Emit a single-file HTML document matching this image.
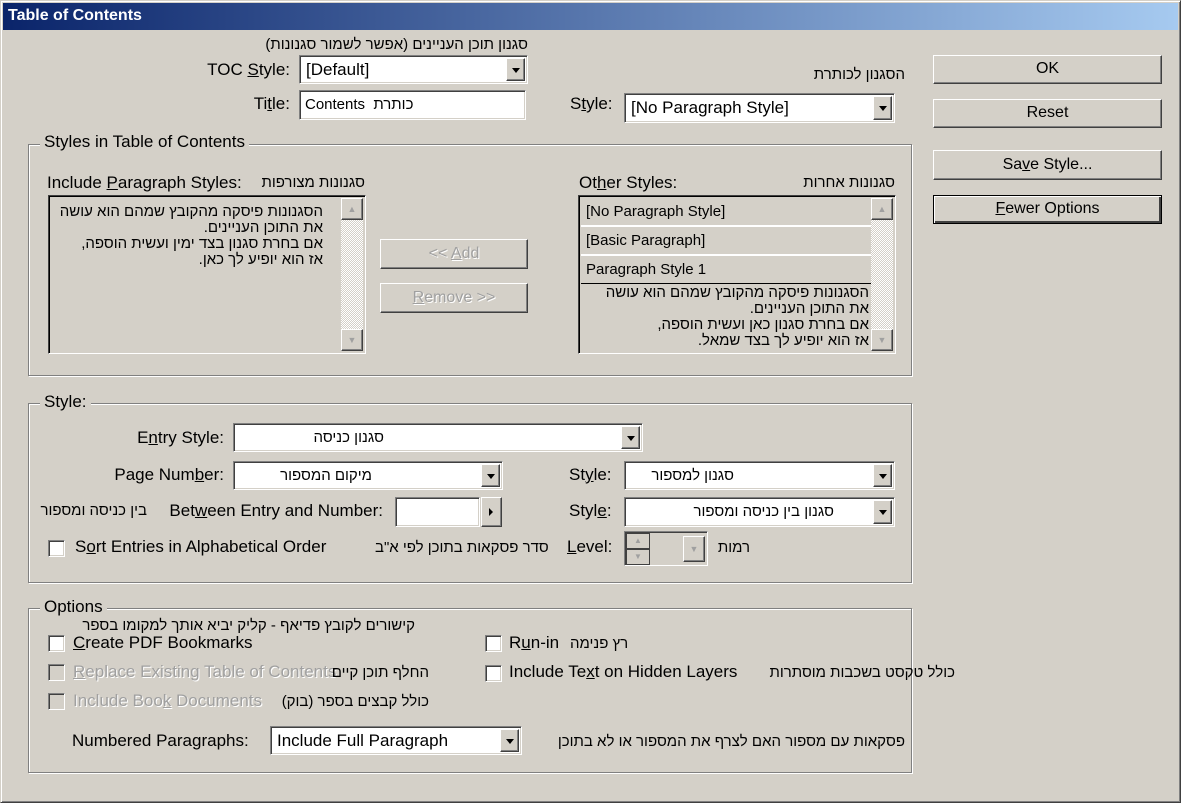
<!DOCTYPE html>
<html><head><meta charset="utf-8"><style>
*{box-sizing:border-box}
body{margin:0;width:1181px;height:803px;background:#d4d0c8;position:relative;overflow:hidden;font-family:"Liberation Sans","Noto Sans CJK JP",sans-serif;font-size:16px;color:#000}
.a{position:absolute;white-space:nowrap}
.he{position:absolute;white-space:nowrap;direction:rtl;font-family:"Liberation Sans","Noto Sans CJK JP",sans-serif;font-size:15px}
.sunk{position:absolute;background:#fff;border:1px solid;border-color:#808080 #fff #fff #808080;box-shadow:inset 1px 1px #404040,inset -1px -1px #d4d0c8}
.btn{position:absolute;background:#d4d0c8;border:1px solid;border-color:#fff #404040 #404040 #fff;box-shadow:inset -1px -1px #808080;text-align:center}
.dd{position:absolute;right:2px;top:2px;bottom:2px;width:19px;background:#d4d0c8;border:1px solid;border-color:#fff #404040 #404040 #fff;box-shadow:inset -1px -1px #808080}
.dd:after{content:"";position:absolute;left:5px;top:50%;margin-top:-2px;border-left:4px solid transparent;border-right:4px solid transparent;border-top:5px solid #000}
.grp{position:absolute;border:1px solid #808080;box-shadow:inset 1px 1px #fff,1px 1px #fff}
.gl{position:absolute;background:#d4d0c8;padding:0 4px;color:#000}
.cb{position:absolute;width:17px;height:17px;background:#fff;border:1px solid;border-color:#808080 #fff #fff #808080;box-shadow:inset 1px 1px #404040,inset -1px -1px #d4d0c8}
.cb.dis{background:#d4d0c8}
.dis{color:#a0a0a0}
u{text-decoration:underline}
</style></head><body>
<div class="a" style="left:0;top:0;width:1181px;height:803px;border:1px solid;border-color:#d4d0c8 #404040 #404040 #d4d0c8;box-shadow:inset 1px 1px #fff,inset -1px -1px #808080"></div>
<div class="a" style="left:3px;top:3px;width:1175px;height:27px;background:linear-gradient(90deg,#0a246a,#a6caf0);color:#fff;font-weight:bold;font-size:16px;line-height:26px;padding-left:5px">Table of Contents</div>

<div class="he" style="right:653px;top:36px">סגנון תוכן העניינים (אפשר לשמור סגנונות)</div>
<div class="a" style="right:891px;top:60px;font-size:17px">TOC <u>S</u>tyle:</div>
<div class="sunk" style="left:299px;top:55px;width:229px;height:29px"><span class="a" style="left:6px;top:4px;font-size:17px">[Default]</span><div class="dd"></div></div>
<div class="a" style="right:891px;top:94px;font-size:17px">Ti<u>t</u>le:</div>
<div class="sunk" style="left:299px;top:90px;width:227px;height:30px"><span class="a" style="left:5px;top:5px;font-size:15px">Contents&nbsp; <span style="direction:rtl">כותרת</span></span></div>
<div class="he" style="right:276px;top:66px">הסגנון לכותרת</div>
<div class="a" style="left:570px;top:94px;font-size:17px">S<u>t</u>yle:</div>
<div class="sunk" style="left:624px;top:93px;width:271px;height:30px"><span class="a" style="left:6px;top:4px;font-size:17px">[No Paragraph Style]</span><div class="dd"></div></div>

<div class="btn" style="left:933px;top:55px;width:229px;height:29px;line-height:26px">OK</div>
<div class="btn" style="left:933px;top:99px;width:229px;height:29px;line-height:26px">Reset</div>
<div class="btn" style="left:933px;top:150px;width:229px;height:30px;line-height:27px">Sa<u>v</u>e Style...</div>
<div class="btn" style="left:933px;top:195px;width:229px;height:29px;line-height:25px;border-color:#000;box-shadow:inset 1px 1px #fff,inset -2px -2px #404040,inset -1px -1px #808080"><u>F</u>ewer Options</div>

<div class="grp" style="left:28px;top:144px;width:884px;height:232px"></div>
<div class="gl" style="left:40px;top:132px;font-size:17px">Styles in Table of Contents</div>
<div class="a" style="left:47px;top:173px;font-size:17px">Include <u>P</u>aragraph Styles:</div>
<div class="he" style="right:816px;top:174px">סגנונות מצורפות</div>
<div class="a" style="left:48px;top:195px;width:318px;height:159px;border:1px solid;border-color:#404040 #fff #fff #404040;box-shadow:inset 1px 1px #000,inset -1px -1px #d4d0c8">
 <div class="he" style="right:42px;top:8px;line-height:16px;text-align:right">הסגנונות פיסקה מהקובץ שמהם הוא עושה<br>את התוכן העניינים.<br>אם בחרת סגנון בצד ימין ועשית הוספה,<br>אז הוא יופיע לך כאן.</div>
 <div class="a" style="right:2px;top:2px;bottom:2px;width:22px;background:repeating-conic-gradient(#fff 0 25%,#d4d0c8 0 50%) 0 0/2px 2px"></div>
 <div class="btn" style="right:2px;top:2px;width:22px;height:22px;color:#a0a0a0;font-size:9px;line-height:20px">▲</div>
 <div class="btn" style="right:2px;bottom:2px;width:22px;height:22px;color:#a0a0a0;font-size:9px;line-height:20px">▼</div>
</div>
<div class="btn dis" style="left:380px;top:239px;width:148px;height:30px;line-height:27px;text-shadow:1px 1px #fff">&lt;&lt; <u>A</u>dd</div>
<div class="btn dis" style="left:380px;top:283px;width:148px;height:30px;line-height:27px;text-shadow:1px 1px #fff"><u>R</u>emove &gt;&gt;</div>
<div class="a" style="left:579px;top:173px;font-size:17px">Ot<u>h</u>er Styles:</div>
<div class="he" style="right:286px;top:174px">סגנונות אחרות</div>
<div class="a" style="left:578px;top:195px;width:318px;height:159px;border:1px solid;border-color:#404040 #fff #fff #404040;box-shadow:inset 1px 1px #000,inset -1px -1px #d4d0c8">
 <div class="a" style="left:2px;top:2px;width:290px;height:29px;border-bottom:2px solid #fff;line-height:27px;padding-left:5px;font-size:15px">[No Paragraph Style]</div>
 <div class="a" style="left:2px;top:31px;width:290px;height:29px;border-bottom:2px solid #fff;line-height:27px;padding-left:5px;font-size:15px">[Basic Paragraph]</div>
 <div class="a" style="left:2px;top:60px;width:290px;height:28px;border-bottom:1px solid #000;line-height:27px;padding-left:5px;font-size:15px">Paragraph Style 1</div>
 <div class="he" style="right:26px;top:89px;line-height:16px;text-align:right">הסגנונות פיסקה מהקובץ שמהם הוא עושה<br>את התוכן העניינים.<br>אם בחרת סגנון כאן ועשית הוספה,<br>אז הוא יופיע לך בצד שמאל.</div>
 <div class="a" style="right:2px;top:2px;bottom:2px;width:22px;background:repeating-conic-gradient(#fff 0 25%,#d4d0c8 0 50%) 0 0/2px 2px"></div>
 <div class="btn" style="right:2px;top:2px;width:22px;height:22px;color:#a0a0a0;font-size:9px;line-height:20px">▲</div>
 <div class="btn" style="right:2px;bottom:2px;width:22px;height:22px;color:#a0a0a0;font-size:9px;line-height:20px">▼</div>
</div>

<div class="grp" style="left:28px;top:403px;width:884px;height:180px"></div>
<div class="gl" style="left:40px;top:392px;font-size:17px">Style:</div>
<div class="a" style="right:957px;top:428px;font-size:17px">E<u>n</u>try Style:</div>
<div class="sunk" style="left:233px;top:423px;width:410px;height:29px"><span class="he" style="right:258px;top:5px">סגנון כניסה</span><div class="dd"></div></div>
<div class="a" style="right:957px;top:465px;font-size:17px">Page Num<u>b</u>er:</div>
<div class="sunk" style="left:233px;top:461px;width:270px;height:29px"><span class="he" style="right:130px;top:5px">מיקום המספור</span><div class="dd"></div></div>
<div class="a" style="left:569px;top:465px;font-size:17px">St<u>y</u>le:</div>
<div class="sunk" style="left:624px;top:461px;width:271px;height:29px"><span class="he" style="right:160px;top:5px">סגנון למספור</span><div class="dd"></div></div>
<div class="he" style="right:1034px;top:502px">בין כניסה ומספור</div>
<div class="a" style="right:798px;top:501px;font-size:17px">Bet<u>w</u>een Entry and Number:</div>
<div class="sunk" style="left:395px;top:497px;width:85px;height:30px"></div>
<div class="btn" style="left:481px;top:497px;width:21px;height:30px"><span class="a" style="left:7px;top:10px;border-top:4px solid transparent;border-bottom:4px solid transparent;border-left:4px solid #000"></span></div>
<div class="a" style="left:569px;top:501px;font-size:17px">Styl<u>e</u>:</div>
<div class="sunk" style="left:624px;top:497px;width:271px;height:30px"><span class="he" style="right:60px;top:5px">סגנון בין כניסה ומספור</span><div class="dd"></div></div>
<div class="cb" style="left:48px;top:540px"></div>
<div class="a" style="left:75px;top:537px;font-size:17px">S<u>o</u>rt Entries in Alphabetical Order</div>
<div class="he" style="left:375px;top:539px">סדר פסקאות בתוכן לפי א"ב</div>
<div class="a" style="left:567px;top:537px;font-size:17px"><u>L</u>evel:</div>
<div class="a" style="left:624px;top:531px;width:84px;height:35px;border:1px solid;border-color:#808080 #fff #fff #808080;box-shadow:inset 1px 1px #404040">
 <div class="a" style="left:1px;top:1px;width:24px;height:16px;border:1px solid #404040;color:#a0a0a0;font-size:8px;text-align:center;line-height:14px">▲</div>
 <div class="a" style="left:1px;top:17px;width:24px;height:16px;border:1px solid #404040;color:#a0a0a0;font-size:8px;text-align:center;line-height:14px">▼</div>
 <div class="btn" style="right:2px;top:4px;width:22px;height:26px;color:#a0a0a0;font-size:9px;line-height:24px">▼</div>
</div>
<div class="he" style="right:431px;top:539px">רמות</div>

<div class="grp" style="left:28px;top:608px;width:884px;height:165px"></div>
<div class="gl" style="left:40px;top:597px;font-size:17px">Options</div>
<div class="he" style="right:766px;top:617px">קישורים לקובץ פדיאף - קליק יביא אותך למקומו בספר</div>
<div class="cb" style="left:48px;top:635px"></div>
<div class="a" style="left:73px;top:633px;font-size:17px"><u>C</u>reate PDF Bookmarks</div>
<div class="cb dis" style="left:48px;top:664px"></div>
<div class="a dis" style="left:73px;top:662px;font-size:17px;text-shadow:1px 1px #fff"><u>R</u>eplace Existing Table of Contents</div>
<div class="he" style="right:752px;top:664px">החלף תוכן קיים</div>
<div class="cb dis" style="left:48px;top:693px"></div>
<div class="a dis" style="left:73px;top:691px;font-size:17px;text-shadow:1px 1px #fff">Include Boo<u>k</u> Documents</div>
<div class="he" style="right:752px;top:693px">כולל קבצים בספר (בוק)</div>
<div class="cb" style="left:485px;top:635px"></div>
<div class="a" style="left:509px;top:633px;font-size:17px">R<u>u</u>n-in</div>
<div class="he" style="left:570px;top:635px">רץ פנימה</div>
<div class="cb" style="left:485px;top:665px"></div>
<div class="a" style="left:509px;top:662px;font-size:17px">Include Te<u>x</u>t on Hidden Layers</div>
<div class="he" style="right:226px;top:664px">כולל טקסט בשכבות מוסתרות</div>
<div class="a" style="left:72px;top:731px;font-size:17px">Numbered Para<u>g</u>raphs:</div>
<div class="sunk" style="left:270px;top:726px;width:252px;height:29px"><span class="a" style="left:6px;top:4px;font-size:17px">Include Full Paragraph</span><div class="dd"></div></div>
<div class="he" style="right:276px;top:733px">פסקאות עם מספור האם לצרף את המספור או לא בתוכן</div>
</body></html>
